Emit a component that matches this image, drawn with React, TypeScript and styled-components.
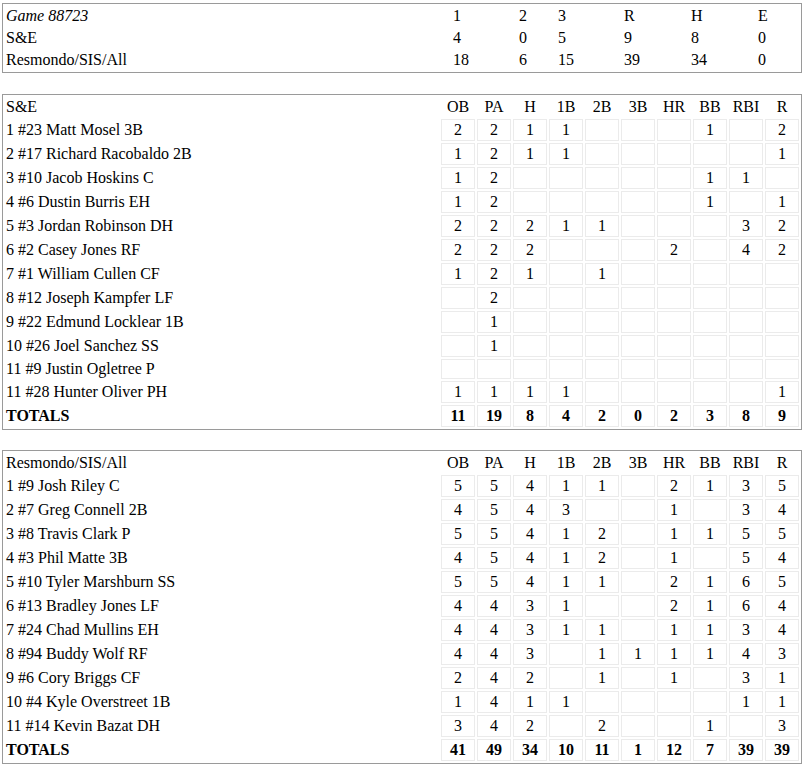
import styled, { createGlobalStyle } from "styled-components"

const GlobalStyle = createGlobalStyle`
    body {
        margin : 0;
        background : #ffffff;
        color : #000000;
        font-family : "Liberation Serif", "Times New Roman", serif;
        font-size : 16px;
    }
`

const Page = styled.div`
    padding : 3px 2px 2px 2px;
    display : flex;
    flex-direction : column;
`

const Table = styled.table<{ $space?: number }>`
    width : 800px;
    table-layout : fixed;
    border : 1px solid #9a9a9a;
    border-spacing : 2px;
    line-height : 18px;
    margin-top : ${p => p.$space ?? 0}px;
`

const Cell = styled.td<{ $w?: number; $italic?: boolean; $bold?: boolean }>`
    box-sizing : border-box;
    padding : 1px;
    text-align : left;
    font-weight : ${p => p.$bold ? "bold" : "normal"};
    font-style : ${p => p.$italic ? "italic" : "normal"};
    ${p => p.$w ? `width : ${p.$w}px;` : ""}
    white-space : nowrap;
`

const StatHead = styled.td`
    box-sizing : border-box;
    width : 34px;
    padding : 1px;
    text-align : center;
    font-weight : normal;
`

const StatCell = styled.td<{ $bold?: boolean }>`
    box-sizing : border-box;
    width : 34px;
    padding : 1px;
    border : 1px solid #ebebeb;
    text-align : center;
    font-weight : ${p => p.$bold ? "bold" : "normal"};
`

const scoreCols = [445, 64, 37, 64, 65, 65, 42]
const scoreRows: string[][] = [
    ["Game 88723", "1", "2", "3", "R", "H", "E"],
    ["S&E", "4", "0", "5", "9", "8", "0"],
    ["Resmondo/SIS/All", "18", "6", "15", "39", "34", "0"],
]

const statKeys = ["OB", "PA", "H", "1B", "2B", "3B", "HR", "BB", "RBI", "R"]

type Player = { name: string; stats: string[] }

const se: Player[] = [
    { name: "1 #23 Matt Mosel 3B", stats: ["2", "2", "1", "1", "", "", "", "1", "", "2"] },
    { name: "2 #17 Richard Racobaldo 2B", stats: ["1", "2", "1", "1", "", "", "", "", "", "1"] },
    { name: "3 #10 Jacob Hoskins C", stats: ["1", "2", "", "", "", "", "", "1", "1", ""] },
    { name: "4 #6 Dustin Burris EH", stats: ["1", "2", "", "", "", "", "", "1", "", "1"] },
    { name: "5 #3 Jordan Robinson DH", stats: ["2", "2", "2", "1", "1", "", "", "", "3", "2"] },
    { name: "6 #2 Casey Jones RF", stats: ["2", "2", "2", "", "", "", "2", "", "4", "2"] },
    { name: "7 #1 William Cullen CF", stats: ["1", "2", "1", "", "1", "", "", "", "", ""] },
    { name: "8 #12 Joseph Kampfer LF", stats: ["", "2", "", "", "", "", "", "", "", ""] },
    { name: "9 #22 Edmund Locklear 1B", stats: ["", "1", "", "", "", "", "", "", "", ""] },
    { name: "10 #26 Joel Sanchez SS", stats: ["", "1", "", "", "", "", "", "", "", ""] },
    { name: "11 #9 Justin Ogletree P", stats: ["", "", "", "", "", "", "", "", "", ""] },
    { name: "11 #28 Hunter Oliver PH", stats: ["1", "1", "1", "1", "", "", "", "", "", "1"] },
]
const seTotals = ["11", "19", "8", "4", "2", "0", "2", "3", "8", "9"]

const resmondo: Player[] = [
    { name: "1 #9 Josh Riley C", stats: ["5", "5", "4", "1", "1", "", "2", "1", "3", "5"] },
    { name: "2 #7 Greg Connell 2B", stats: ["4", "5", "4", "3", "", "", "1", "", "3", "4"] },
    { name: "3 #8 Travis Clark P", stats: ["5", "5", "4", "1", "2", "", "1", "1", "5", "5"] },
    { name: "4 #3 Phil Matte 3B", stats: ["4", "5", "4", "1", "2", "", "1", "", "5", "4"] },
    { name: "5 #10 Tyler Marshburn SS", stats: ["5", "5", "4", "1", "1", "", "2", "1", "6", "5"] },
    { name: "6 #13 Bradley Jones LF", stats: ["4", "4", "3", "1", "", "", "2", "1", "6", "4"] },
    { name: "7 #24 Chad Mullins EH", stats: ["4", "4", "3", "1", "1", "", "1", "1", "3", "4"] },
    { name: "8 #94 Buddy Wolf RF", stats: ["4", "4", "3", "", "1", "1", "1", "1", "4", "3"] },
    { name: "9 #6 Cory Briggs CF", stats: ["2", "4", "2", "", "1", "", "1", "", "3", "1"] },
    { name: "10 #4 Kyle Overstreet 1B", stats: ["1", "4", "1", "1", "", "", "", "", "1", "1"] },
    { name: "11 #14 Kevin Bazat DH", stats: ["3", "4", "2", "", "2", "", "", "1", "", "3"] },
]
const resTotals = ["41", "49", "34", "10", "11", "1", "12", "7", "39", "39"]

function BoxScore({ team, players, totals, space }: { team: string; players: Player[]; totals: string[]; space: number }) {
    return (
        <Table $space={space}>
            <tbody>
                <tr>
                    <Cell $w={434}>{team}</Cell>
                    {statKeys.map(k => <StatHead key={k}>{k}</StatHead>)}
                </tr>
                {players.map((pl, i) => (
                    <tr key={i}>
                        <Cell>{pl.name}</Cell>
                        {pl.stats.map((s, j) => <StatCell key={j}>{s}</StatCell>)}
                    </tr>
                ))}
                <tr>
                    <Cell $bold>TOTALS</Cell>
                    {totals.map((s, j) => <StatCell key={j} $bold>{s}</StatCell>)}
                </tr>
            </tbody>
        </Table>
    )
}

export default function App() {
    return (
        <Page>
            <GlobalStyle />
            <Table>
                <tbody>
                    {scoreRows.map((row, i) => (
                        <tr key={i}>
                            {row.map((c, j) => (
                                <Cell key={j} $w={i === 0 ? scoreCols[j] : undefined} $italic={i === 0 && j === 0}>{c}</Cell>
                            ))}
                        </tr>
                    ))}
                </tbody>
            </Table>
            <BoxScore team="S&E" players={se} totals={seTotals} space={21} />
            <BoxScore team="Resmondo/SIS/All" players={resmondo} totals={resTotals} space={20} />
        </Page>
    )
}
